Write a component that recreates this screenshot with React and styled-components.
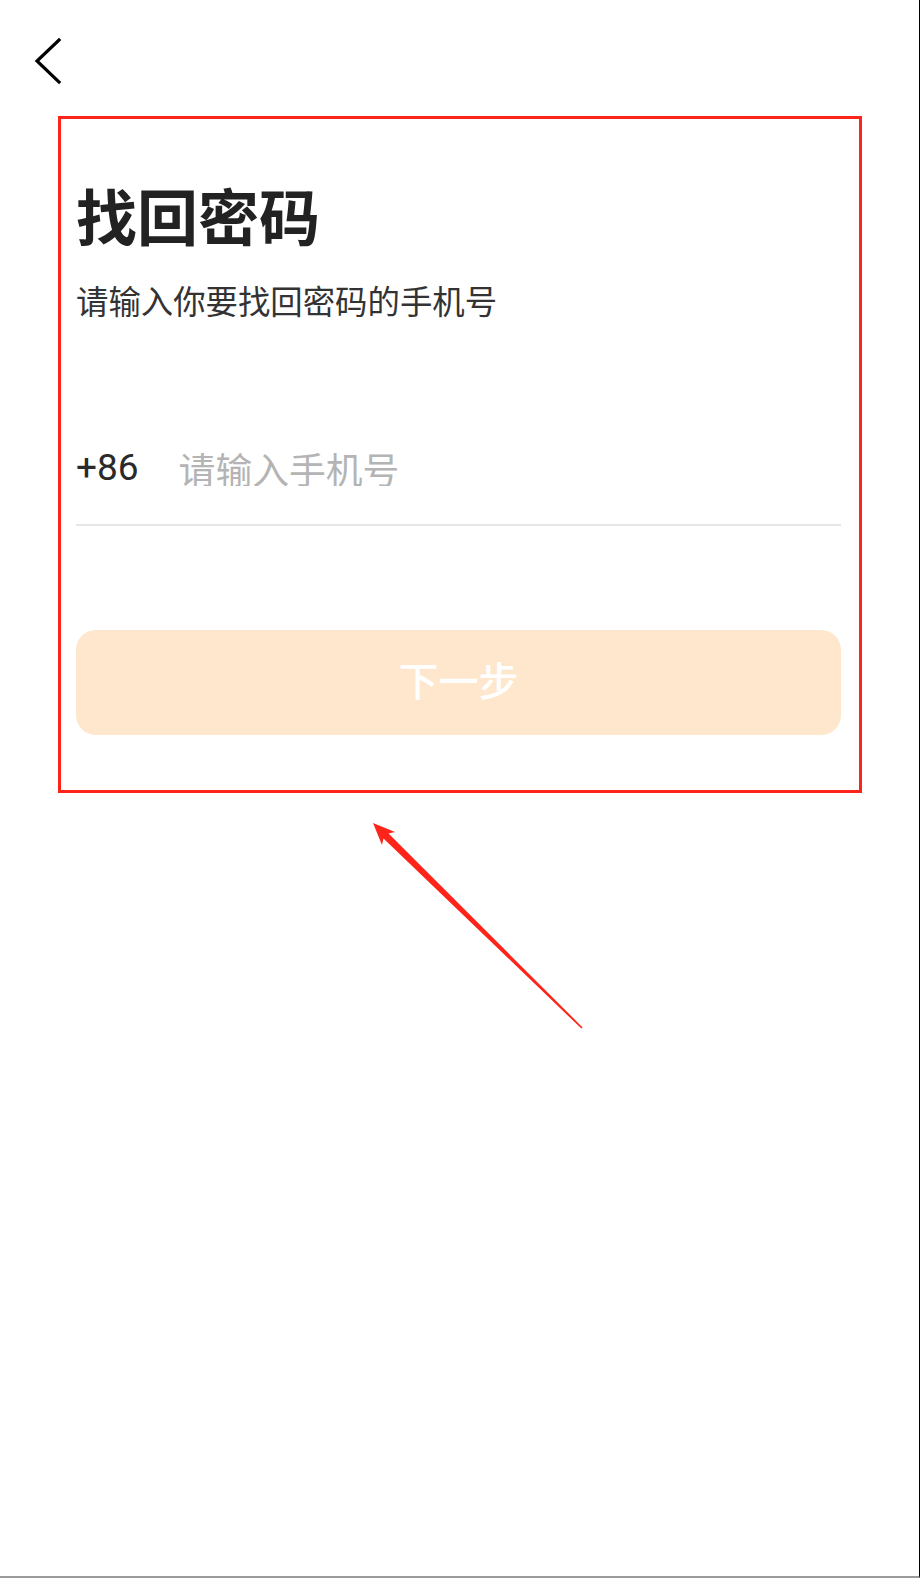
import React from "react";
import styled, { createGlobalStyle } from "styled-components";

const Global = createGlobalStyle`
  html, body { margin: 0; padding: 0; background: #fff; }
  * { box-sizing: border-box; }
  body { font-family: Roboto, "Noto Sans CJK SC", sans-serif; }
`;

const Page = styled.div`
  position: relative;
  width: 920px;
  height: 1578px;
  background: #fff;
  border-right: 1px solid #000;
  border-bottom: 2px solid #9a9a9a;
  overflow: hidden;
`;

const NavBar = styled.div`
  height: 116px;
  padding: 37px 0 0 33px;
  display: flex;
  align-items: flex-start;
`;

const BackButton = styled.button`
  border: none;
  background: none;
  padding: 0;
  width: 30px;
  height: 48px;
  display: block;
  cursor: pointer;
`;

const Card = styled.section`
  margin-left: 58px;
  width: 804px;
  border: 3px solid #fe2419;
  padding: 65px 18px 55px 15px;
  display: flex;
  flex-direction: column;
`;

const Title = styled.h1`
  margin: 0;
  font-family: "Noto Sans CJK SC", sans-serif;
  font-size: 61px;
  line-height: 61px;
  font-weight: 700;
  color: #222;
`;

const Subtitle = styled.p`
  margin: 38px 0 0;
  font-family: "Noto Sans CJK SC", sans-serif;
  font-size: 32.4px;
  line-height: 33px;
  color: #333;
`;

const InputRow = styled.label`
  margin-top: 133px;
  display: flex;
  align-items: center;
  gap: 40px;
  padding-bottom: 38px;
  border-bottom: 2px solid #e6e6e6;
`;

const Prefix = styled.span`
  font-family: Roboto, "Noto Sans CJK SC", sans-serif;
  font-size: 37px;
  line-height: 36px;
  color: #2a2a2a;
`;

const PhoneInput = styled.input`
  flex: 1;
  border: none;
  outline: none;
  padding: 0;
  height: 37px;
  font-family: "Noto Sans CJK SC", sans-serif;
  font-size: 36.8px;
  line-height: 37px;
  color: #333;
  background: transparent;
  &::placeholder { color: #b4b4b4; }
`;

const NextButton = styled.button`
  margin-top: 104px;
  height: 105px;
  border: none;
  border-radius: 20px;
  background: #fee7cd;
  color: #fff;
  font-family: "Noto Sans CJK SC", sans-serif;
  font-size: 40px;
  font-weight: 500;
  line-height: 40px;
  padding: 0 0 8px;
`;

const ArrowOverlay = styled.svg`
  position: absolute;
  left: 0;
  top: 0;
  width: 920px;
  height: 1578px;
  pointer-events: none;
`;

export default function App() {
  return (
    <>
      <Global />
      <Page>
        <NavBar>
          <BackButton aria-label="返回">
            <svg width="30" height="48" viewBox="0 0 30 48">
              <polyline points="26,3 4,24 26,45" fill="none" stroke="#000" strokeWidth="3.2" strokeLinecap="square" strokeLinejoin="miter" />
            </svg>
          </BackButton>
        </NavBar>
        <Card>
          <Title>找回密码</Title>
          <Subtitle>请输入你要找回密码的手机号</Subtitle>
          <InputRow>
            <Prefix>+86</Prefix>
            <PhoneInput placeholder="请输入手机号" />
          </InputRow>
          <NextButton>下一步</NextButton>
        </Card>
        <ArrowOverlay viewBox="0 0 920 1578">
          <polygon
            points="373,823 395,832 388.5,833.5 582.6,1027.4 581.4,1028.6 383.5,838.5 382,845"
            fill="#fe2419"
          />
        </ArrowOverlay>
      </Page>
    </>
  );
}
